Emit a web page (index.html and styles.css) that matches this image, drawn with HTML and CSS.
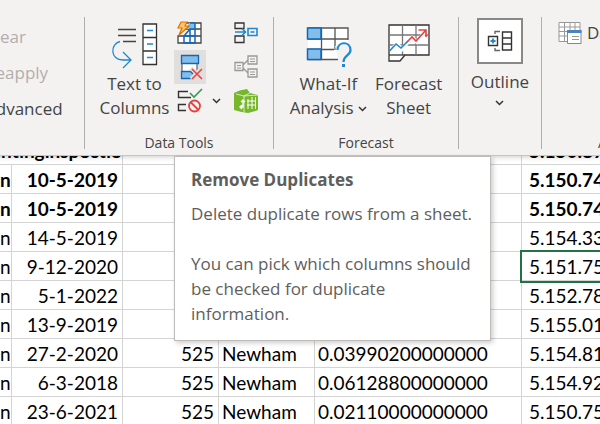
FILE: index.html
```html
<!DOCTYPE html>
<html lang="en">
<head>
<meta charset="utf-8">
<title>Data ribbon</title>
<link rel="stylesheet" href="styles.css">
</head>
<body>
<div class="app">
  <header class="ribbon">
    <section class="group filter">
      <button class="row-button" disabled>Clear</button>
      <button class="row-button" disabled>Reapply</button>
      <button class="row-button">Advanced</button>
    </section>
    <section class="group data-tools">
      <div class="tools">
        <button class="big">
          <svg width="48" height="46" viewBox="0 0 48 46" fill="none" stroke-width="1.3">
            <path d="M7 9.500h18M7 15.500h18M12 21.500h13" stroke="#444"/>
            <path d="M32 4h13.500v40.500H32zM32 17.500h13.500M32 31h13.500" fill="#fff" stroke="#333"/>
            <path d="M36 10.500h6M36 24h6M36 37.500h6" stroke="#1e88d0"/>
            <path d="M9 21.500C-1 24-1 40 12 40H20M12 32l8 8l-8 8" stroke="#1e88d0"/>
          </svg>
          <span>Text to<br>Columns</span>
        </button>
        <div class="small-grid">
          <button class="small" aria-label="Flash Fill">
            <svg width="26" height="26" viewBox="0 0 26 26" fill="none">
              <path d="M8 10V3h16v20H1v-7h23M8 9h16" fill="#fff" stroke="#444" stroke-width="1.300"/>
              <path d="M12 3h6v6h-9z" fill="#83bdec"/>
              <path d="M18 3v20H7v-7h11M18 3h-5M7 16l6-7h5M13 9v14" stroke="#1267b5" stroke-width="1.500"/>
              <path d="M4 2h6L8 6h4L2 15l3-7H1z" fill="#ffc66b" stroke="#e07000" stroke-width="1.200"/>
            </svg>
          </button>
          <button class="small" aria-label="Consolidate">
            <svg width="26" height="26" viewBox="0 0 26 26" fill="none" stroke="#333" stroke-width="1.300">
              <path d="M2 8.500V3h9v5.500zM2 22.500V16h9v6.500z"/>
              <path d="M2 12h10M9 8.500l3.500 3.500l-3.500 3.500M15 8.500h9v7h-9zM17.500 12h4" stroke="#1e88d0" stroke-width="1.600"/>
            </svg>
          </button>
          <button class="small active" aria-label="Remove Duplicates" aria-describedby="tip">
            <svg width="26" height="26" viewBox="0 0 26 26" fill="none">
              <path d="M5 9h15v9H5z" fill="#fff" stroke="#444"/>
              <path d="M4.500 1.500h17v8h-17zM4.500 17.500h9l3 3v4h-12z" fill="#83bdec" stroke="#1267b5" stroke-width="1.300"/>
              <path d="M14 14l11 11M25 14L14 25" stroke="#e1dfdd" stroke-width="4"/>
              <path d="M15 15l10 10M25 15L15 25" stroke="#e84040" stroke-width="1.500"/>
            </svg>
          </button>
          <button class="small" aria-label="Relationships">
            <svg width="26" height="26" viewBox="0 0 26 26" fill="none" stroke="#999" stroke-width="1.300">
              <path d="M2 8.500h8v8H2zM15 2h9v8h-9zM15 15h9v8h-9zM10 11l5-5M10 14l5 5"/>
              <path d="M4 11.500h4M4 14h4M17 5h5M17 7.500h5M17 18h5M17 20.500h5" stroke-width="1"/>
            </svg>
          </button>
          <button class="small wide" aria-label="Data Validation">
            <svg width="26" height="26" viewBox="0 0 26 26" fill="none" stroke-width="1.400">
              <path d="M11 3.500H1.500v6H14M9 16.500H1.500v6H9" stroke="#333"/>
              <path d="M13 5l4 4L25 1" stroke="#2f9e50" stroke-width="1.600"/>
              <circle cx="17.500" cy="18" r="5.500" stroke="#e84040" stroke-width="1.800"/>
              <path d="M13.500 14l8 8" stroke="#e84040" stroke-width="1.800"/>
            </svg>
            <svg class="chev" width="9" height="6" viewBox="0 0 9 6"><path d="M1 1l3.500 3.500L8 1" fill="none" stroke="#333" stroke-width="1.500"/></svg>
          </button>
          <button class="small" aria-label="Manage Data Model">
            <svg width="26" height="26" viewBox="0 0 26 26" fill="none">
              <path d="M1 5Q6 2 14 1l3 4l8 2v15q-5 2-10 3Q7 24 1 22z" fill="#76b82a"/>
              <path d="M3 6l8 2l6-3M11 8v16M11 8l14-1" stroke="#f3f2f1" stroke-width=".8"/>
              <path d="M15 11v10M19 9v12M22.500 9v12M14 13h9M14 17h9" stroke="#fff"/>
              <path d="M7 19h3v-7M8 14l2-2l2 2M9 17l-2 2l2 2" stroke="#fff" stroke-width="1.400"/>
            </svg>
          </button>
        </div>
      </div>
      <h2>Data Tools</h2>
    </section>
    <section class="group forecast">
      <div class="tools">
        <button class="big">
          <svg width="48" height="46" viewBox="0 0 48 46" fill="none" stroke-width="1.300">
            <path d="M4 8h40v31H4z" fill="#fff"/>
            <path d="M4 8h40v12M4 19h40M4 29.500h26M17.500 8v31M31 8v22M4 39.500h32" stroke="#555"/>
            <path d="M3.500 8h13.500v11H3.500zM3.500 29h13.500v10.500H3.500z" fill="#83bdec" stroke="#1267b5" stroke-width="1.500"/>
            <path d="M31 26h17v20H34v-9z" fill="#f3f2f1"/>
            <path d="M33.500 30c0-9 13-9 13 0c0 6-7 5-7 12" stroke="#1e88d0" stroke-width="2.200"/>
            <path d="M38 44h3v3h-3z" fill="#1e88d0"/>
          </svg>
          <span>What-If<br>Analysis <svg class="chev" width="9" height="6" viewBox="0 0 9 6"><path d="M1 1l3.500 3.500L8 1" fill="none" stroke="#333" stroke-width="1.500"/></svg></span>
        </button>
        <button class="big">
          <svg width="48" height="46" viewBox="0 0 48 46" fill="none" stroke-width="1.300">
            <path d="M4 5h40v30H20l-5 6H4z" fill="#fff" stroke="#333"/>
            <path d="M4 15h40M4 25h40M17.500 5v30M31 5v30" stroke="#777"/>
            <path d="M4 35h16" stroke="#333"/>
            <path d="M6 30l6-6l5 5l6-7l4-4l5 4L40 12" stroke="#fff" stroke-width="4"/>
            <path d="M4.500 31l6.500-7l5 4l7-7" stroke="#1e88d0" stroke-width="1.600"/>
            <path d="M22 22l5-5l4 4L41 10M33.500 10H41v7" stroke="#e84040" stroke-width="1.600"/>
          </svg>
          <span>Forecast<br>Sheet</span>
        </button>
      </div>
      <h2>Forecast</h2>
    </section>
    <section class="group outline">
      <button class="big">
        <span class="frame">
          <svg width="26" height="22" viewBox="0 0 26 22" fill="none" stroke="#333" stroke-width="1.400">
            <path d="M1.500 6.500h9v9h-9z"/>
            <path d="M15.500 2h9v18h-9zM15.500 8h9M15.500 14h9"/>
            <path d="M13 1.500H8V4M13 20.500H8V18" stroke="#666"/>
            <path d="M3.500 11h5M6 8.500v5" stroke="#1e88d0" stroke-width="1.800"/>
          </svg>
        </span>
        <span>Outline</span>
        <svg class="chev" width="9" height="6" viewBox="0 0 9 6"><path d="M1 1l3.500 3.500L8 1" fill="none" stroke="#333" stroke-width="1.500"/></svg>
      </button>
    </section>
    <section class="group analysis">
      <button class="row-button">
        <svg width="24" height="24" viewBox="0 0 24 24" fill="none">
          <path d="M1 1.500h21v19H1zM1 6h21M1 10.500h21M1 15h21M6.500 1v19M12 1v19M17 1v19" fill="#fff" stroke="#999"/>
          <path d="M9.500 9.500h13.500v13H9.500z" fill="#fff" stroke="#888"/>
          <path d="M9 9h14.500v3H9z" fill="#4a83c4"/>
          <path d="M14 15.500h7M14 18.500h7" stroke="#999"/>
        </svg>
        Data Analysis
      </button>
      <h2>Analysis</h2>
    </section>
  </header>
  <main class="sheet">
    <table>
      <colgroup><col class="c-name"><col class="c-date"><col class="c-num"><col class="c-area"><col class="c-rate"><col></colgroup>
      <tbody>
        <tr class="strong"><td class="r" colspan="2"><span>huntinginspectie</span></td><td></td><td></td><td>0.03990200000000</td><td>5.150.878</td></tr>
        <tr class="strong"><td class="r">n</td><td class="date">10-5-2019</td><td></td><td></td><td></td><td>5.150.743</td></tr>
        <tr class="strong"><td class="r">n</td><td class="date">10-5-2019</td><td></td><td></td><td></td><td>5.150.743</td></tr>
        <tr><td class="r">n</td><td class="date">14-5-2019</td><td></td><td></td><td></td><td>5.154.331</td></tr>
        <tr><td class="r">n</td><td class="date">9-12-2020</td><td></td><td></td><td></td><td class="selected">5.151.750</td></tr>
        <tr><td class="r">n</td><td class="date">5-1-2022</td><td></td><td></td><td></td><td>5.152.781</td></tr>
        <tr><td class="r">n</td><td class="date">13-9-2019</td><td></td><td></td><td></td><td>5.155.012</td></tr>
        <tr><td class="r">n</td><td class="date">27-2-2020</td><td class="r">525</td><td>Newham</td><td>0.03990200000000</td><td>5.154.810</td></tr>
        <tr><td class="r">n</td><td class="date">6-3-2018</td><td class="r">525</td><td>Newham</td><td>0.06128800000000</td><td>5.154.921</td></tr>
        <tr><td class="r">n</td><td class="date">23-6-2021</td><td class="r">525</td><td>Newham</td><td>0.02110000000000</td><td>5.150.751</td></tr>
      </tbody>
    </table>
  </main>
  <aside class="tooltip" id="tip" role="tooltip">
    <h3>Remove Duplicates</h3>
    <p>Delete duplicate rows from a sheet.</p>
    <p>You can pick which columns should be checked for duplicate information.</p>
  </aside>
</div>
</body>
</html>
```
FILE: styles.css
```css
* { box-sizing: border-box; }
body {
  margin: 0;
  background: #fff;
  font-family: "Open Sans", "Noto Sans", sans-serif;
  color: #444;
}
.app {
  position: relative;
  height: 100vh;
  overflow: hidden;
}
.ribbon {
  display: flex;
  height: 156px;
  padding-top: 17px;
  background: #f3f2f1;
  border-bottom: 1px solid #c8c6c4;
  box-shadow: 0 1px 5px #0003;
  position: relative;
  overflow: hidden;
}
button {
  border: 0;
  padding: 0;
  background: none;
  font: inherit;
  color: inherit;
}
svg { display: block; flex: none; overflow: visible; }
.group {
  display: flex;
  flex-direction: column;
  flex: none;
  height: 132px;
  border-right: 1px solid #b1afad;
  font-size: 17px;
  line-height: 24px;
}
.group h2 {
  margin: auto 0 0;
  font-size: 14px;
  line-height: 12px;
  font-weight: 400;
  text-align: center;
}
.filter {
  width: 85px;
  align-items: flex-start;
  gap: 12px;
  padding-top: 8px;
}
.filter .row-button { white-space: nowrap; margin-left: -15px; }
.row-button:disabled { color: #b1afad; }
.tools { display: flex; }
.big {
  display: flex;
  flex-direction: column;
  align-items: center;
  gap: 6px;
  padding-top: 3px;
  white-space: nowrap;
}
.big .chev { display: inline-block; vertical-align: middle; }
.data-tools { width: 189px; }
.data-tools .big { width: 89px; padding-left: 10px; }
.small-grid {
  display: grid;
  grid-template-columns: 56px 32px;
  grid-auto-rows: 34px;
  margin-top: -1px;
}
.small {
  display: flex;
  align-items: center;
  width: 32px;
  height: 34px;
  padding-left: 3px;
}
.wide { width: 50px; gap: 9px; }
.active { background: #e1dfdd; }
.forecast { width: 185px; }
.forecast .tools { justify-content: center; gap: 8px; }
.outline { width: 83px; align-items: center; }
.outline .big { padding-top: 1px; }
.frame {
  display: grid;
  place-items: center;
  width: 46px;
  height: 46px;
  border: 2px solid #8a8886;
  background: #fff;
}
.analysis { width: 260px; padding: 4px 0 0 16px; border: 0; }
.analysis .row-button { display: flex; gap: 5px; }
.analysis h2 { text-align: left; padding-left: 40px; }
.sheet {
  margin-top: -20px;
  overflow: hidden;
}
table {
  width: 100%;
  table-layout: fixed;
  border-collapse: separate;
  border-spacing: 0;
  font-family: Lato, sans-serif;
  font-size: 19px;
  line-height: 26px;
  color: #000;
}
.c-name { width: 12px; }
.c-date { width: 111px; }
.c-num { width: 96px; }
.c-area { width: 96px; }
.c-rate { width: 207px; }
td {
  height: 29px;
  padding: 2px 4px 0 3px;
  border: solid #d4d4d4;
  border-width: 0 1px 1px 0;
  white-space: nowrap;
  overflow: hidden;
}
td:first-child { padding: 2px 1px 0 0; }
td:last-child { padding-left: 7px; border-right: 0; }
.r { text-align: right; }
.r span { float: right; }
.date { text-align: right; }
.strong { font-weight: 700; }
.selected { outline: 2px solid #217346; }
.tooltip {
  position: absolute;
  top: 156px;
  left: 174px;
  width: 317px;
  padding: 10px 16px 14px;
  border: 1px solid #bebbb8;
  background: #fff;
  box-shadow: 2px 2px 5px #0003;
  color: #605e5c;
  font-size: 17px;
  line-height: 25px;
}
.tooltip h3 {
  margin: 0 0 9px;
  font-size: 17px;
  line-height: 25px;
}
.tooltip p { margin: 0; }
.tooltip p + p { margin-top: 25px; }
```
